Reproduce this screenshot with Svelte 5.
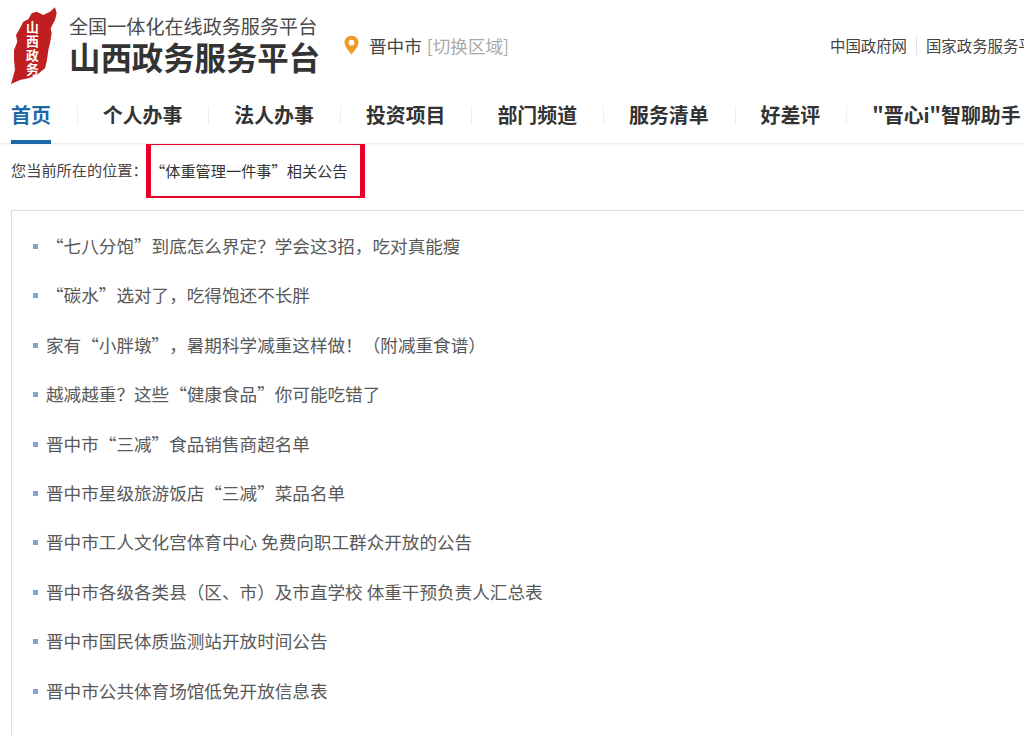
<script>
  const nav = [
    { label: '个人办事' }, { label: '法人办事' }, { label: '投资项目' }, { label: '部门频道' },
    { label: '服务清单' }, { label: '好差评' }, { label: '"晋心i"智聊助手' }
  ];
  const items = [
    '“七八分饱”到底怎么界定？学会这3招，吃对真能瘦',
    '“碳水”选对了，吃得饱还不长胖',
    '家有“小胖墩”，暑期科学减重这样做！（附减重食谱）',
    '越减越重？这些“健康食品”你可能吃错了',
    '晋中市“三减”食品销售商超名单',
    '晋中市星级旅游饭店“三减”菜品名单',
    '晋中市工人文化宫体育中心 免费向职工群众开放的公告',
    '晋中市各级各类县（区、市）及市直学校 体重干预负责人汇总表',
    '晋中市国民体质监测站开放时间公告',
    '晋中市公共体育场馆低免开放信息表'
  ];
</script>

<div class="page" lang="zh-CN">
  <header class="top">
    <div class="logo">
      <svg viewBox="15 6 180 264" width="60" height="88" aria-hidden="true">
        <path fill="#bf1f20" d="M165 22 L150 35 L130 45 L110 35 L95 40 L85 58 L70 65 L60 85 L48 105 L52 125 L42 150 L42 180 L45 210 L38 235 L33 252 L60 240 L85 235 L110 225 L135 205 L140 185 L145 150 L150 130 L155 100 L152 85 L165 60 L170 40 Z" />
      </svg>
      <span class="seal">山西政务</span>
    </div>
    <div class="brand">
      <div class="sub">全国一体化在线政务服务平台</div>
      <div class="title">山西政务服务平台</div>
    </div>
    <div class="city">
      <svg viewBox="0 0 16 20" width="15" height="20" aria-hidden="true">
        <path fill="#ef9a2b" fill-rule="evenodd" d="M8 0C3.6 0 .5 3.300.5 7.400.5 12.400 8 20 8 20s7.500-7.600 7.500-12.600C15.500 3.300 12.400 0 8 0Zm0 4.500a3 3 0 1 1 0 6 3 3 0 0 1 0-6Z" />
      </svg>
      <span class="city-name">晋中市</span>
      <span class="switch">[切换区域]</span>
    </div>
    <div class="links">
      <span class="link first">中国政府网</span>
      <span class="link">国家政务服务平台</span>
    </div>
  </header>

  <nav class="nav">
    <span class="nav-item active">首页</span>
    {#each nav as n}
      <span class="sep"></span>
      <span class="nav-item">{n.label}</span>
    {/each}
  </nav>

  <div class="crumb">
    <span class="crumb-label">您当前所在的位置：</span>
    <span class="crumb-box">“体重管理一件事”相关公告</span>
  </div>

  <section class="card">
    <ul class="list">
      {#each items as item}
        <li>{item}</li>
      {/each}
    </ul>
  </section>
</div>

<style>
  :global(body) {
    margin: 0;
    background: #fff;
    overflow: hidden;
  }
  .page {
    width: 1024px;
    height: 735px;
    overflow: hidden;
    font-family: "Noto Sans CJK SC", "Liberation Sans", sans-serif;
    color: #333;
    text-spacing-trim: space-all;
  }
  .top {
    height: 90px;
    display: flex;
    align-items: flex-start;
    padding-left: 5px;
    white-space: nowrap;
    overflow: hidden;
  }
  .logo {
    position: relative;
    width: 60px;
    height: 88px;
    margin-top: 2px;
    flex: none;
  }
  .seal {
    position: absolute;
    left: 20px;
    top: 19px;
    width: 14px;
    writing-mode: vertical-rl;
    font-size: 12.800px;
    font-weight: 700;
    line-height: 14px;
    letter-spacing: 1px;
    color: #fff;
  }
  .brand {
    margin-left: 4px;
    width: 260px;
    flex: none;
  }
  .sub {
    margin-top: 15px;
    font-size: 19.1px;
    line-height: 23px;
    color: #4a4a4a;
  }
  .title {
    font-size: 31.4px;
    line-height: 38px;
    font-weight: 700;
    color: #333;
  }
  .city {
    display: flex;
    align-items: center;
    margin-left: 15px;
    margin-top: 33px;
    height: 24px;
    flex: none;
  }
  .city-name {
    margin-left: 10px;
    font-size: 17.6px;
    color: #444;
  }
  .switch {
    margin-left: 5px;
    font-size: 17.6px;
    color: #aaa;
  }
  .links {
    display: flex;
    margin-left: auto;
    margin-top: 36px;
    width: 194px;
    flex: none;
    font-size: 15.4px;
    line-height: 19px;
    color: #444;
  }
  .link {
    flex: none;
  }
  .link.first {
    padding-right: 9px;
    margin-right: 9px;
    border-right: 1px solid #e3e3e3;
  }
  .nav {
    height: 54px;
    display: flex;
    align-items: center;
    padding: 0 0 4px 11px;
    box-sizing: border-box;
    border-bottom: 1px solid #eee;
    box-shadow: 0 1px 2px rgba(0, 0, 0, 0.04);
    white-space: nowrap;
  }
  .nav-item {
    position: relative;
    display: block;
    font-size: 19.9px;
    font-weight: 700;
    line-height: 46px;
    color: #333;
    flex: none;
  }
  .nav-item.active {
    color: #1d68a7;
  }
  .nav-item.active::after {
    content: "";
    position: absolute;
    left: 0;
    right: 0;
    bottom: -6px;
    height: 4px;
    background: #1d68a7;
  }
  .sep {
    width: 1px;
    height: 18px;
    margin: 0 25px 0 26px;
    background: #eee;
    flex: none;
  }
  .crumb {
    display: flex;
    height: 54px;
    padding-left: 11px;
    white-space: nowrap;
    font-size: 15.2px;
    color: #444;
  }
  .crumb-label {
    width: 135px;
    margin-top: 14px;
    line-height: 22px;
    flex: none;
  }
  .crumb-box {
    box-sizing: border-box;
    width: 219px;
    height: 54px;
    padding: 14px 0 0 0;
    line-height: 22px;
    text-indent: -1px;
    border: solid #e8002d;
    border-width: 1px 5px 2px 5px;
    color: #333;
    flex: none;
  }
  .card {
    margin: 12px 0 0 11px;
    border: 1px solid #ddd;
    border-right: 0;
    height: 600px;
    box-sizing: border-box;
  }
  .list {
    list-style: none;
    margin: 0;
    padding: 10px 0 0 0;
  }
  li {
    position: relative;
    height: 49.4px;
    line-height: 49.4px;
    padding-left: 34px;
    font-size: 17.6px;
    color: #595959;
    white-space: nowrap;
  }
  li::before {
    content: "";
    position: absolute;
    left: 21px;
    top: 23px;
    width: 5px;
    height: 5px;
    background: #7ea6d0;
  }
</style>
